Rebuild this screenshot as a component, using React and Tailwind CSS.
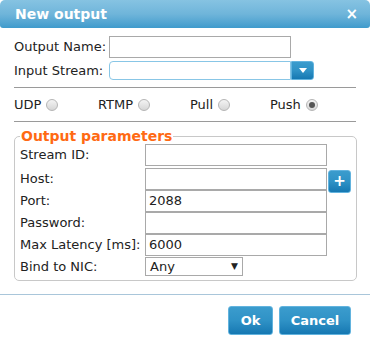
import React from 'react';

const font = { fontFamily: '"DejaVu Sans", Verdana, sans-serif' };

function Radio({ checked }) {
  return (
    <span className="inline-flex items-center justify-center w-[12px] h-[12px] rounded-full border border-[#b5b5b5] bg-gradient-to-b from-[#f4f4f4] to-[#d6d6d6] ml-[5px]">
      {checked && <span className="w-[6px] h-[6px] rounded-full bg-[#555]" />}
    </span>
  );
}

function Field({ label, value }) {
  return (
    <div className="flex items-center h-[22px]">
      <span className="w-[125px] shrink-0">{label}</span>
      <div className="w-[182px] h-[22px] border border-[#a9a9a9] bg-white px-[3px] leading-[20px]">{value}</div>
    </div>
  );
}

function BlueBtn({ children, className }) {
  return (
    <button className={'flex items-center justify-center rounded-[3px] border border-[#62b3de] bg-gradient-to-b from-[#3b9ccd] via-[#2f92c6] to-[#1578b2] text-white font-bold ' + className}>
      {children}
    </button>
  );
}

export default function App() {
  return (
    <div className="w-[372px] h-[349px] bg-white text-[13px] text-[#222]" style={font}>
      <div className="w-[370px] h-[349px] flex flex-col">
        {/* Title bar */}
        <div className="h-[28px] rounded-t-[5px] rounded-b-[3px] bg-gradient-to-b from-[#86c3e2] via-[#6fb5da] to-[#3f9bcc] flex items-center justify-between px-[15px] text-white">
          <span className="font-bold text-[14px]">New output</span>
          <span className="font-bold text-[15px] mr-[-3px]">×</span>
        </div>

        <div className="px-[14px]">
          <div className="flex items-center mt-[8px] h-[22px]">
            <span className="w-[95px] shrink-0">Output Name:</span>
            <div className="w-[182px] h-[22px] border border-[#a9a9a9]" />
          </div>
          <div className="flex items-center mt-[3px] h-[19px]">
            <span className="w-[95px] shrink-0">Input Stream:</span>
            <div className="flex h-[19px]">
              <div className="w-[182px] h-[19px] border border-[#88c6e6] rounded-l-[4px]" />
              <div className="w-[23px] h-[19px] rounded-r-[3px] bg-gradient-to-b from-[#3b9ccd] via-[#2f92c6] to-[#1578b2] border border-[#62b3de] flex items-center justify-center">
                <svg width="8" height="5" viewBox="0 0 8 5"><path d="M0 0h8L4 5z" fill="#fff" /></svg>
              </div>
            </div>
          </div>
          <div className="h-px bg-[#9a9a9a] mt-[7px]" />

          <div className="flex items-center h-[33px]">
            <span className="w-[84px] flex items-center">UDP<Radio /></span>
            <span className="w-[92px] flex items-center">RTMP<Radio /></span>
            <span className="w-[80px] flex items-center">Pull<Radio /></span>
            <span className="flex items-center">Push<Radio checked /></span>
          </div>
          <div className="h-px bg-[#9a9a9a]" />

          <fieldset className="mt-[6px] border border-[#c8c8c8] rounded-[5px] px-[5px] pb-[4px] pt-0">
            <legend className="text-[#ff6a13] font-bold text-[14px] px-[1px] leading-[16px]">Output parameters</legend>
            <div className="flex flex-col">
              <Field label="Stream ID:" />
              <div className="flex items-center h-[23px] mt-px">
                <span className="w-[125px] shrink-0">Host:</span>
                <div className="w-[182px] h-[22px] border border-[#a9a9a9]" />
                <BlueBtn className="w-[23px] h-[23px] ml-px mt-[6px] text-[15px] leading-none">+</BlueBtn>
              </div>
              <Field label="Port:" value="2088" />
              <Field label="Password:" />
              <Field label="Max Latency [ms]:" value="6000" />
              <div className="flex items-center h-[19px] mt-[1px]">
                <span className="w-[125px] shrink-0">Bind to NIC:</span>
                <div className="w-[98px] h-[19px] border border-[#a9a9a9] flex items-center justify-between px-[4px]">
                  <span>Any</span>
                  <span className="text-[9px]">▼</span>
                </div>
              </div>
            </div>
          </fieldset>
        </div>

        <div className="h-px bg-[#a9c6da] mt-[13px]" />
        <div className="flex justify-end gap-[6px] pr-[19px] mt-[11px]">
          <BlueBtn className="w-[45px] h-[29px] text-[13px]">Ok</BlueBtn>
          <BlueBtn className="w-[72px] h-[29px] text-[13px]">Cancel</BlueBtn>
        </div>
      </div>
    </div>
  );
}
